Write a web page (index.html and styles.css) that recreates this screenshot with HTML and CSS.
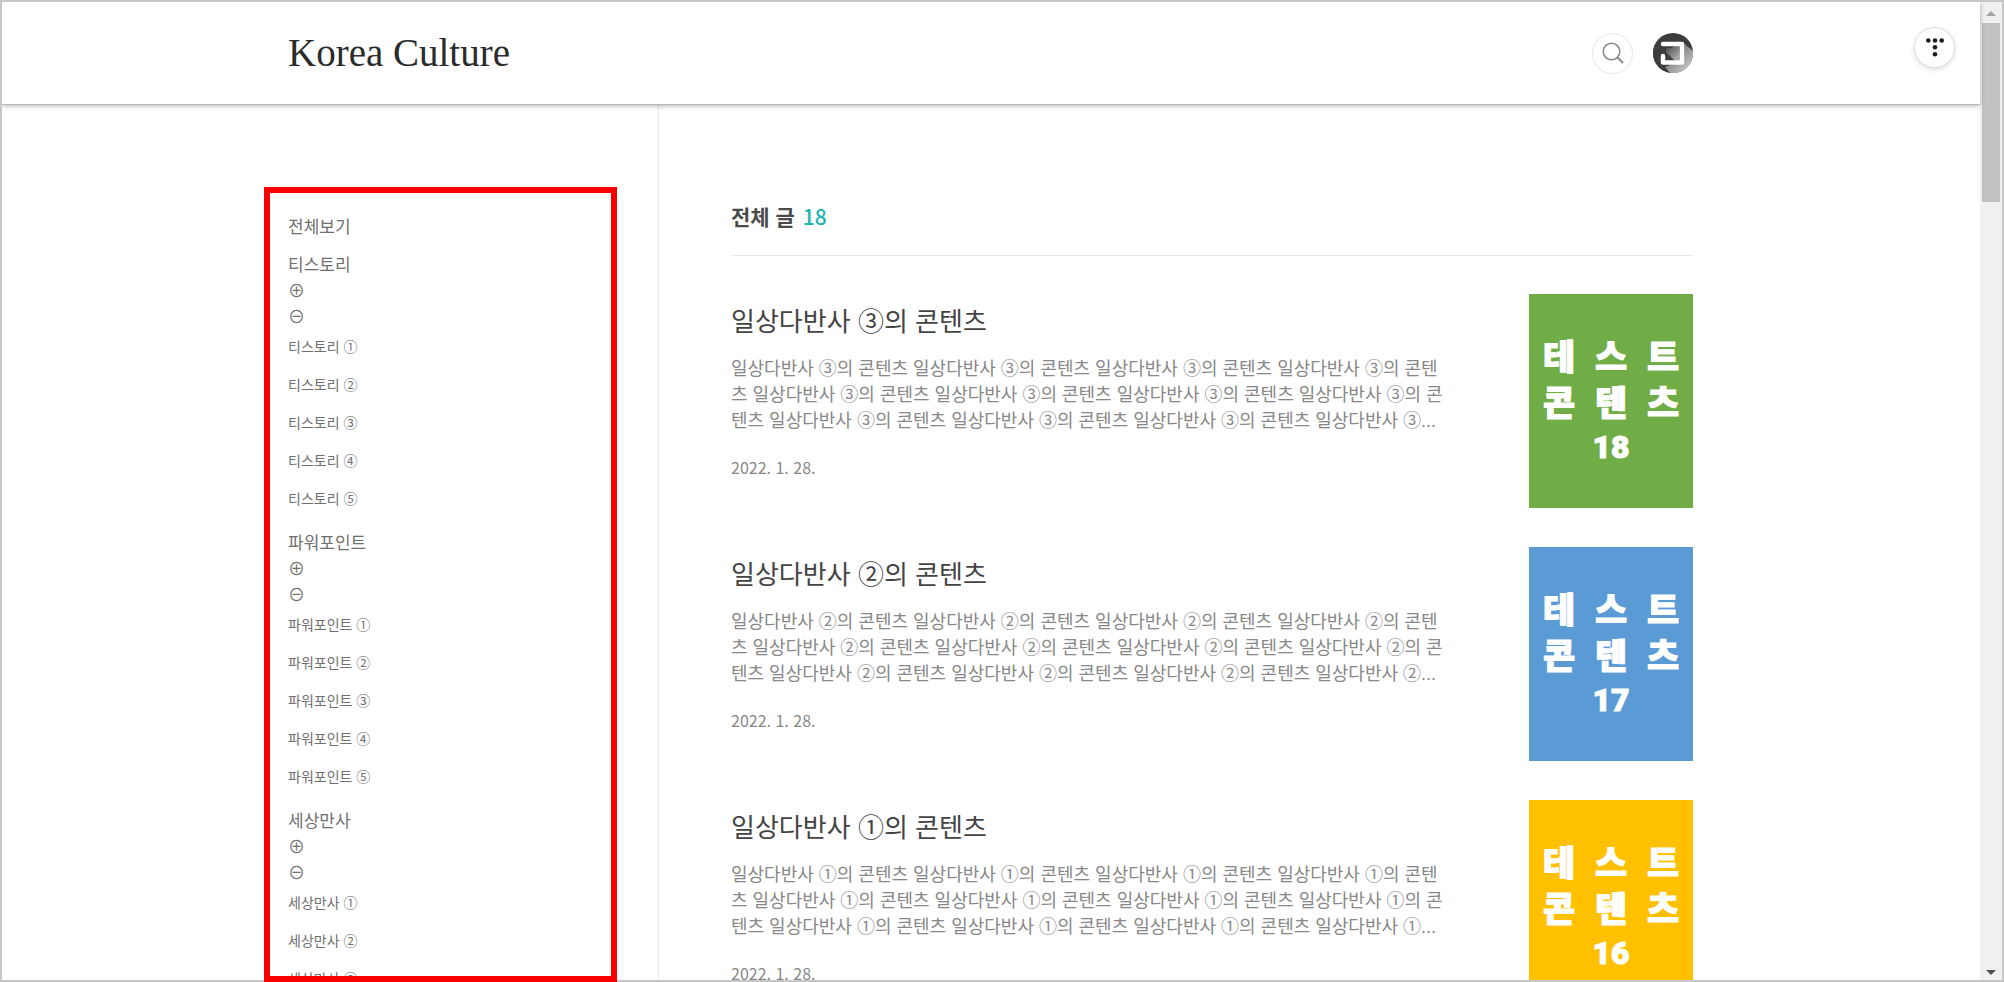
FILE: index.html
```html
<!DOCTYPE html>
<html lang="ko">
<head>
<meta charset="utf-8">
<meta name="viewport" content="width=device-width, initial-scale=1">
<title>Korea Culture</title>
<link rel="stylesheet" href="styles.css">
</head>
<body>
<div class="window">
  <div class="page">
    <header class="header">
      <div class="header-inner">
        <h1 class="site-title"><a href="#">Korea Culture</a></h1>
        <div class="tools">
          <button class="search-button" type="button" aria-label="검색">
            <svg width="22" height="22" viewBox="0 0 22 22" fill="none" stroke="#8a8a8a">
              <circle cx="9.500" cy="9.500" r="8.300" stroke-width="1.500"/>
              <path d="M15.300 15.300L21 21" stroke-width="2"/>
            </svg>
          </button>
          <button class="avatar" type="button" aria-label="프로필">
            <svg width="40" height="40" viewBox="0 0 40 40">
              <defs>
                <linearGradient id="shade" x1="0" y1="0" x2="1" y2="1">
                  <stop offset="0.350" stop-color="#777"/>
                  <stop offset="0.850" stop-color="#c4c4c4"/>
                </linearGradient>
                <linearGradient id="core" x1="0" y1="0" x2="1" y2="1">
                  <stop offset="0" stop-color="#555"/>
                  <stop offset="1" stop-color="#b4b4b4"/>
                </linearGradient>
                <clipPath id="disc"><circle cx="20" cy="20" r="20"/></clipPath>
              </defs>
              <g clip-path="url(#disc)">
                <rect width="40" height="40" fill="#3d3d3d"/>
                <path d="M29 9L40 18V40H16L8 32V22L20 14Z" fill="url(#shade)"/>
                <path d="M0 12L8 13L24 29L12 34L17 40H0Z" fill="#3d3d3d"/>
                <path d="M13 15H26V27H21L13 19Z" fill="url(#core)"/>
                <path d="M10 11H29V29.500H10V23" fill="none" stroke="#fff" stroke-width="4.500" stroke-linecap="round" stroke-linejoin="round"/>
              </g>
            </svg>
          </button>
        </div>
      </div>
      <button class="menu-button" type="button" aria-label="티스토리 메뉴">
        <svg width="18" height="19" viewBox="0 0 18 19" fill="#1c1c1c">
          <circle cx="2.300" cy="2.500" r="2.300"/><circle cx="9" cy="2.500" r="2.300"/><circle cx="15.700" cy="2.500" r="2.300"/>
          <circle cx="9" cy="9.300" r="2.300"/><circle cx="9" cy="16.200" r="2.300"/>
        </svg>
      </button>
    </header>

    <div class="content">
      <nav class="sidebar" aria-label="카테고리">
        <ul class="categories">
          <li><a href="#">전체보기</a></li>
          <li>
            <a href="#">티스토리</a><span class="sign">⊕</span><span class="sign">⊖</span>
            <ul class="subcategories">
              <li><a href="#">티스토리 ①</a></li>
              <li><a href="#">티스토리 ②</a></li>
              <li><a href="#">티스토리 ③</a></li>
              <li><a href="#">티스토리 ④</a></li>
              <li><a href="#">티스토리 ⑤</a></li>
            </ul>
          </li>
          <li>
            <a href="#">파워포인트</a><span class="sign">⊕</span><span class="sign">⊖</span>
            <ul class="subcategories">
              <li><a href="#">파워포인트 ①</a></li>
              <li><a href="#">파워포인트 ②</a></li>
              <li><a href="#">파워포인트 ③</a></li>
              <li><a href="#">파워포인트 ④</a></li>
              <li><a href="#">파워포인트 ⑤</a></li>
            </ul>
          </li>
          <li>
            <a href="#">세상만사</a><span class="sign">⊕</span><span class="sign">⊖</span>
            <ul class="subcategories">
              <li><a href="#">세상만사 ①</a></li>
              <li><a href="#">세상만사 ②</a></li>
              <li><a href="#">세상만사 ③</a></li>
            </ul>
          </li>
        </ul>
      </nav>

      <main class="main">
        <h2 class="list-title">전체 글<span class="count">18</span></h2>
        <article class="post">
          <div class="post-body">
            <h3 class="post-title"><a href="#">일상다반사 ③의 콘텐츠</a></h3>
            <p class="excerpt">일상다반사 ③의 콘텐츠 일상다반사 ③의 콘텐츠 일상다반사 ③의 콘텐츠 일상다반사 ③의 콘텐츠 일상다반사 ③의 콘텐츠 일상다반사 ③의 콘텐츠 일상다반사 ③의 콘텐츠 일상다반사 ③의 콘텐츠 일상다반사 ③의 콘텐츠 일상다반사 ③의 콘텐츠 일상다반사 ③의 콘텐츠 일상다반사 ③...</p>
            <time class="date" datetime="2022-01-28">2022. 1. 28.</time>
          </div>
          <a class="thumb green" href="#"><span>테</span><span>스</span><span>트</span><span>콘</span><span>텐</span><span>츠</span><span class="number">18</span></a>
        </article>
        <article class="post">
          <div class="post-body">
            <h3 class="post-title"><a href="#">일상다반사 ②의 콘텐츠</a></h3>
            <p class="excerpt">일상다반사 ②의 콘텐츠 일상다반사 ②의 콘텐츠 일상다반사 ②의 콘텐츠 일상다반사 ②의 콘텐츠 일상다반사 ②의 콘텐츠 일상다반사 ②의 콘텐츠 일상다반사 ②의 콘텐츠 일상다반사 ②의 콘텐츠 일상다반사 ②의 콘텐츠 일상다반사 ②의 콘텐츠 일상다반사 ②의 콘텐츠 일상다반사 ②...</p>
            <time class="date" datetime="2022-01-28">2022. 1. 28.</time>
          </div>
          <a class="thumb blue" href="#"><span>테</span><span>스</span><span>트</span><span>콘</span><span>텐</span><span>츠</span><span class="number">17</span></a>
        </article>
        <article class="post">
          <div class="post-body">
            <h3 class="post-title"><a href="#">일상다반사 ①의 콘텐츠</a></h3>
            <p class="excerpt">일상다반사 ①의 콘텐츠 일상다반사 ①의 콘텐츠 일상다반사 ①의 콘텐츠 일상다반사 ①의 콘텐츠 일상다반사 ①의 콘텐츠 일상다반사 ①의 콘텐츠 일상다반사 ①의 콘텐츠 일상다반사 ①의 콘텐츠 일상다반사 ①의 콘텐츠 일상다반사 ①의 콘텐츠 일상다반사 ①의 콘텐츠 일상다반사 ①...</p>
            <time class="date" datetime="2022-01-28">2022. 1. 28.</time>
          </div>
          <a class="thumb yellow" href="#"><span>테</span><span>스</span><span>트</span><span>콘</span><span>텐</span><span>츠</span><span class="number">16</span></a>
        </article>
      </main>
    </div>
  </div>

  <div class="scrollbar" aria-hidden="true">
    <svg class="arrow" width="10" height="5" viewBox="0 0 10 5"><path d="M0 5L5 0L10 5Z" fill="#a3a3a3"/></svg>
    <div class="thumb-track"><div class="scroll-thumb"></div></div>
    <svg class="arrow" width="10" height="5" viewBox="0 0 10 5"><path d="M0 0L5 5L10 0Z" fill="#505050"/></svg>
  </div>
</div>
<div class="highlight" aria-hidden="true"></div>
</body>
</html>
```
FILE: styles.css
```css
* {
  box-sizing: border-box;
}

body {
  position: relative;
  height: 100vh;
  margin: 0;
  overflow: hidden;
  background: #fff;
  color: #707070;
  font-family: "Noto Sans CJK KR", sans-serif;
}

h1, h2, h3, p, ul {
  margin: 0;
  padding: 0;
}

ul {
  list-style: none;
}

a {
  color: inherit;
  text-decoration: none;
}

button {
  padding: 0;
  border: 0;
  cursor: pointer;
}

/* Browser frame */
.window {
  display: flex;
  height: 100%;
  border: 2px solid #c6c6c6;
  overflow: hidden;
}

.page {
  display: flex;
  flex: 1;
  flex-direction: column;
  min-width: 0;
}

.scrollbar {
  display: flex;
  flex-direction: column;
  align-items: center;
  width: 22px;
  padding: 9px 2px 5px;
  background: #f0f0f0;
}

.arrow {
  flex: none;
}

.thumb-track {
  flex: 1;
  width: 100%;
  padding: 7px 0;
}

.scroll-thumb {
  height: 19%;
  background: #c1c1c1;
}

/* Header */
.header {
  position: relative;
  flex: none;
  padding: 0 40px;
  border-bottom: 1px solid #b9b9b9;
  background: #fff;
  box-shadow: 0 1px 5px rgba(0, 0, 0, 0.3);
}

.header-inner {
  display: flex;
  align-items: center;
  justify-content: space-between;
  max-width: 1406px;
  height: 102px;
  margin: 0 auto;
}

.site-title {
  color: #2b2b2b;
  font: 400 39px/52px "Liberation Serif", serif;
}

.tools {
  display: flex;
  align-items: center;
  gap: 20px;
  padding-right: 1px;
}

.search-button,
.menu-button {
  display: grid;
  place-items: center;
  width: 41px;
  height: 41px;
  border: 1px solid #e6e6e6;
  border-radius: 50%;
  background: #fff;
}

.avatar {
  display: block;
  width: 40px;
  height: 40px;
  border-radius: 50%;
  background: none;
}

.avatar svg {
  display: block;
}

.menu-button {
  position: absolute;
  top: 25px;
  right: 25px;
  border-color: #ddd;
  box-shadow: 0 2px 5px rgba(0, 0, 0, 0.12);
}

/* Columns */
.content {
  display: flex;
  flex: 1;
  width: calc(100% - 80px);
  max-width: 1406px;
  min-height: 0;
  margin: 0 auto;
}

.sidebar {
  flex: none;
  width: 371px;
  padding-top: 108px;
  border-right: 1px solid #ebebeb;
}

.main {
  flex: 1;
  min-width: 0;
  padding: 95px 0 0 72px;
}

/* Category tree */
.categories {
  display: flex;
  flex-direction: column;
  gap: 12px;
  font-size: 17px;
  line-height: 26px;
}

.categories a,
.sign {
  display: block;
}

.subcategories {
  display: flex;
  flex-direction: column;
  gap: 12px;
  padding: 4px 0 6px;
  font-size: 14px;
}

/* Post list */
.list-title {
  padding-bottom: 23px;
  border-bottom: 1px solid #ebebeb;
  color: #4a4a4a;
  font-size: 21px;
  font-weight: 700;
  line-height: 32px;
}

.count {
  margin-left: 8px;
  color: #1db5b2;
  font-weight: 500;
}

.post {
  display: flex;
  justify-content: space-between;
  padding: 38px 1px 1px 0;
}

.post-body {
  flex: 0 1 718px;
  padding-top: 8px;
}

.post-title {
  margin-bottom: 18px;
  color: #444;
  font-size: 26px;
  font-weight: 400;
  line-height: 36px;
}

.excerpt {
  margin-bottom: 21px;
  color: #888;
  font-family: "Liberation Sans", "Noto Sans CJK KR", sans-serif;
  font-size: 18px;
  line-height: 26px;
  word-break: break-all;
}

.date {
  display: block;
  color: #888;
  font-size: 16px;
  line-height: 24px;
}

.thumb {
  display: grid;
  flex: none;
  grid-template-columns: repeat(3, 52px);
  grid-auto-rows: 46px;
  place-content: center;
  width: 164px;
  height: 214px;
  color: #fff;
  font-size: 35px;
  font-weight: 900;
  line-height: 46px;
  text-align: center;
  -webkit-text-stroke: 1px #fff;
}

.number {
  grid-column: 2;
  font-family: Roboto, sans-serif;
  font-size: 32px;
}

.green {
  background: #70ad47;
}

.blue {
  background: #5b9bd5;
}

.yellow {
  background: #ffc000;
}

/* Red frame around the category tree */
.highlight {
  position: absolute;
  top: 187px;
  bottom: 0;
  left: calc(50% - 738px);
  width: 353px;
  border: 6px solid #f80000;
  pointer-events: none;
}
```
